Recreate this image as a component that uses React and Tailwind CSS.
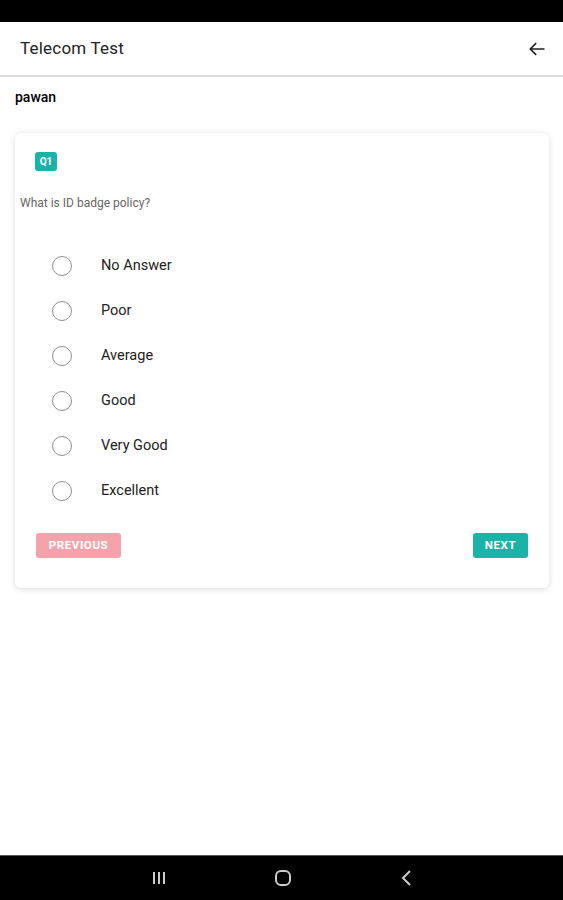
import { useState } from "react";

const options = ["No Answer", "Poor", "Average", "Good", "Very Good", "Excellent"];

const QuizPage = () => {
  const [selected, setSelected] = useState(null);

  return (
    <div className="h-[900px] w-full flex flex-col bg-white font-['Roboto',sans-serif] text-[#212121]">
      {/* status bar */}
      <div className="h-[22px] bg-black" />

      {/* app bar */}
      <div className="h-[55px] flex items-center justify-between pl-5 pr-4 border-b-2 border-[#dcdcdc]">
        <h1 className="text-[17px] tracking-[0.2px] text-[#222]">Telecom Test</h1>
        <svg width="20" height="20" viewBox="0 0 24 24" fill="none" stroke="#222" strokeWidth="2">
          <path d="M21 12H4M11 5l-7 7 7 7" />
        </svg>
      </div>

      <div className="flex-1 px-[15px] pt-[10px]">
        <p className="text-[14px] font-medium leading-5 text-black">pawan</p>

        <div className="mt-[26px] w-[534px] rounded-md bg-white shadow-[0_1px_6px_rgba(0,0,0,0.15)] pt-[15px] pb-[30px]">
          <div className="pl-5">
            <span className="inline-flex items-center justify-center w-[22px] h-[19px] rounded-[3px] bg-[#19b3a8] text-white text-[10px] font-bold">
              Q1
            </span>
          </div>
          <p className="mt-[22px] pl-[5px] text-[12px] text-[#666]">What is ID badge policy?</p>

          <div className="mt-[31px] flex flex-col">
            {options.map((opt, i) => (
              <label
                key={opt}
                className="h-[45px] flex items-center cursor-pointer"
                onClick={() => setSelected(i)}
              >
                <span className="ml-[37px] w-[20px] h-[20px] rounded-full border-[1.5px] border-[#8f8f8f] flex items-center justify-center">
                  {selected === i && <span className="w-[10px] h-[10px] rounded-full bg-[#19b3a8]" />}
                </span>
                <span className="ml-[29px] text-[14.5px] text-[#222]">{opt}</span>
              </label>
            ))}
          </div>

          <div className="mt-[20px] flex justify-between px-[21px]">
            <button className="h-[25px] w-[85px] rounded-[3px] bg-[#f4a3ac] text-white text-[11.5px] font-bold tracking-[0.6px]">
              PREVIOUS
            </button>
            <button className="h-[25px] w-[55px] rounded-[3px] bg-[#19b3a8] text-white text-[11.5px] font-bold tracking-[0.6px]">
              NEXT
            </button>
          </div>
        </div>
      </div>

      {/* nav bar */}
      <div className="h-[45px] bg-black border-t border-[#555] flex items-center justify-center gap-[84px] pl-[3px]">
        <div className="w-[40px] flex justify-center">
          <svg width="16" height="16" viewBox="0 0 16 16" stroke="#ccc" strokeWidth="2">
            <path d="M3 2v12M8 2v12M13 2v12" />
          </svg>
        </div>
        <div className="w-[40px] flex justify-center">
          <svg width="18" height="18" viewBox="0 0 18 18" fill="none" stroke="#ccc" strokeWidth="2">
            <rect x="2" y="2" width="14" height="14" rx="5" />
          </svg>
        </div>
        <div className="w-[40px] flex justify-center">
          <svg width="14" height="18" viewBox="0 0 14 18" fill="none" stroke="#ccc" strokeWidth="2">
            <path d="M10 2L3 9l7 7" />
          </svg>
        </div>
      </div>
    </div>
  );
};

export default function App() {
  return <QuizPage />;
}
